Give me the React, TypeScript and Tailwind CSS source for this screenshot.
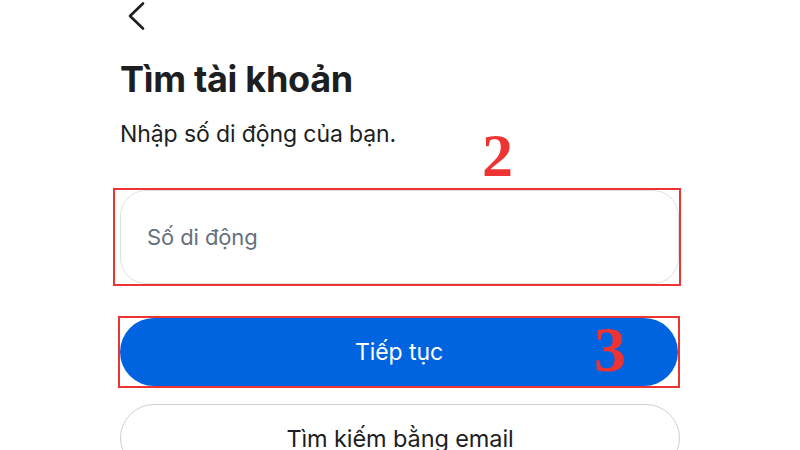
export default function App() {
  return (
    <main
      className="w-[800px] h-[450px] overflow-hidden bg-white text-[#1c1e21]"
      style={{ fontFamily: 'Inter, Roboto, "Noto Sans", sans-serif' }}
    >
      <div className="w-[560px] ml-[120px] flex flex-col">
        {/* back arrow */}
        <svg width="24" height="30" viewBox="0 0 24 30" className="ml-[3px] mt-[1px]">
          <polyline points="20,2.5 7,15 20,27.5" fill="none" stroke="#1c1e21" strokeWidth="2.6" strokeLinecap="round" strokeLinejoin="round" />
        </svg>

        <h1 className="mt-[26px] text-[36px] leading-[44px] font-bold tracking-[-0.3px]">
          Tìm tài khoản
        </h1>
        <p className="mt-[18px] text-[23px] leading-[30px] tracking-[-0.1px]">Nhập số di động của bạn.</p>

        {/* step 2 marker */}
        <div className="relative h-[39px]">
          <span
            className="absolute left-[362px] -top-[26px] text-[62px] leading-[64px] font-bold text-[#ee3333]"
            style={{ fontFamily: '"Liberation Serif", serif' }}
          >
            2
          </span>
        </div>

        <div className="-ml-[7px] -mr-[1px] border-2 border-[#ee3333] pl-[5px]">
          <div className="h-[94px] rounded-[26px] border border-[#dde1e6] flex items-center px-[26px]">
            <span className="text-[22px] text-[#65707d] tracking-[-0.1px]">Số di động</span>
          </div>
        </div>

        <div className="mt-[30px] -ml-[2px] border-2 border-[#ee3333]">
          <div className="relative h-[68px] rounded-full bg-[#0064e0] flex items-center justify-center">
            <span className="text-[23px] text-white tracking-[-0.1px]">Tiếp tục</span>
            <span
              className="absolute left-[474px] top-[0px] text-[64px] leading-[64px] font-bold text-[#ee3333]"
              style={{ fontFamily: '"Liberation Serif", serif' }}
            >
              3
            </span>
          </div>
        </div>

        <div className="mt-[16px] h-[68px] rounded-full border border-[#ccd0d5] flex items-start justify-center pt-[20px]">
          <span className="text-[23.5px] leading-[28px] tracking-[-0.1px]">Tìm kiếm bằng email</span>
        </div>
      </div>
    </main>
  )
}
